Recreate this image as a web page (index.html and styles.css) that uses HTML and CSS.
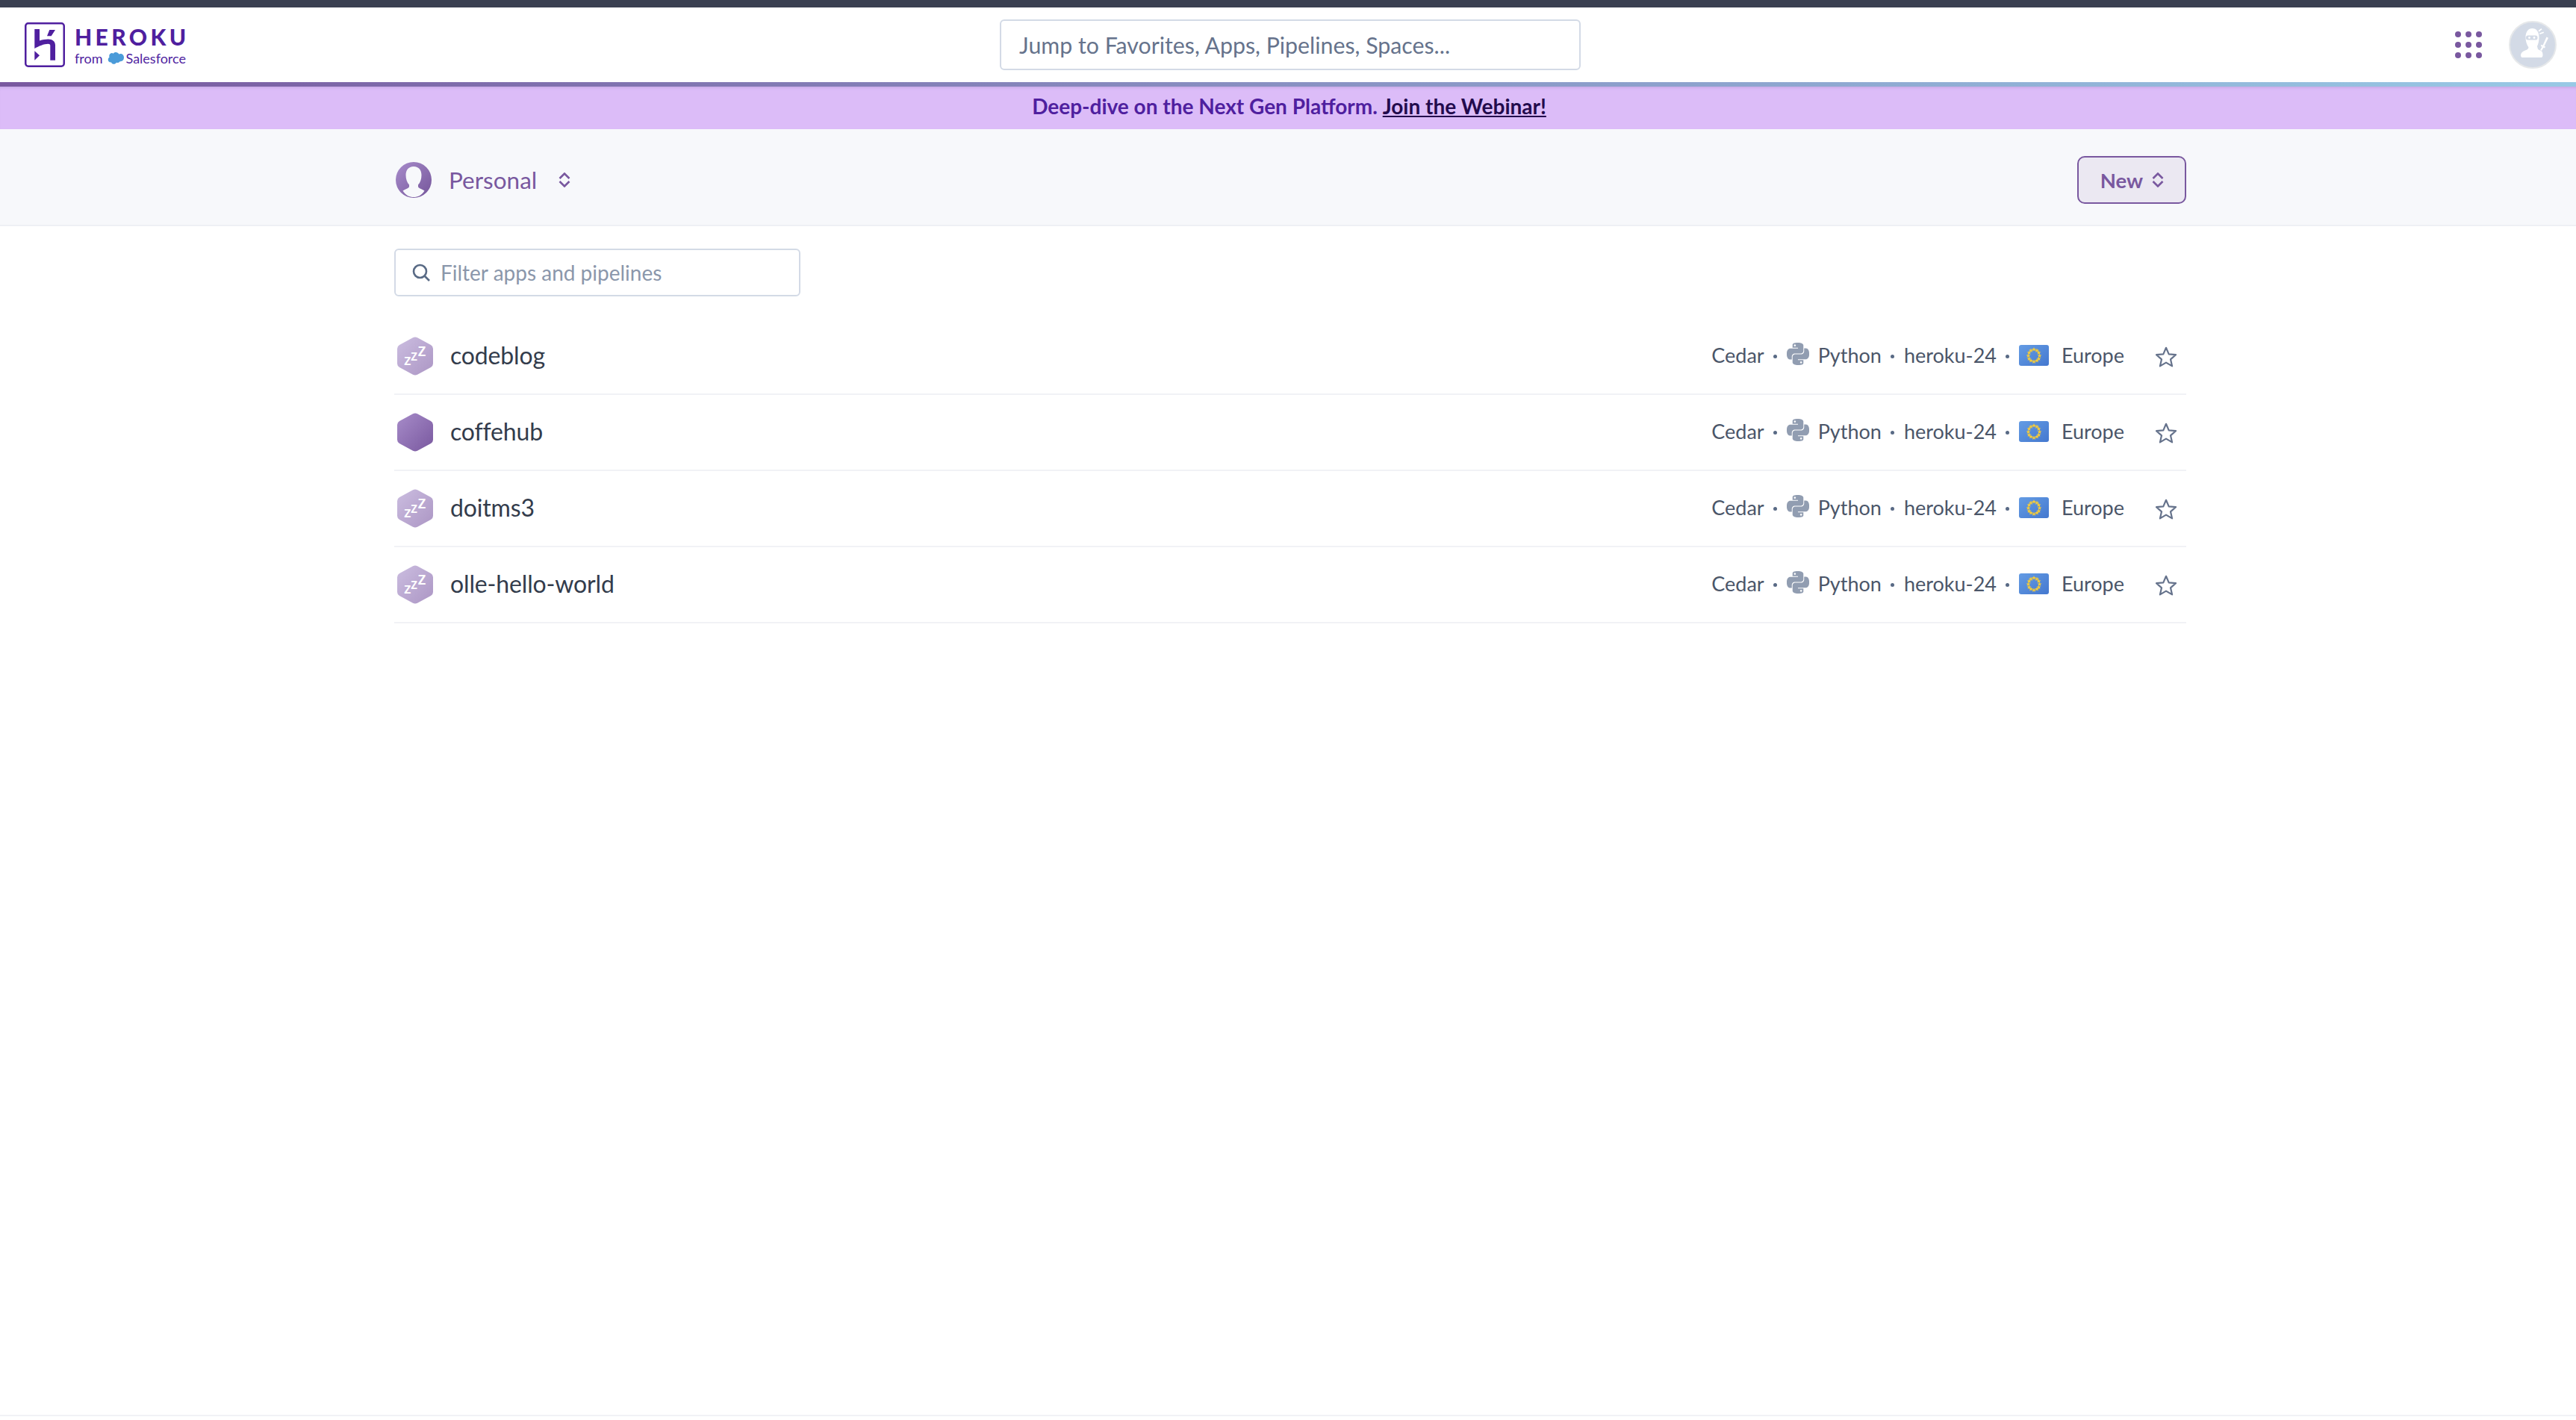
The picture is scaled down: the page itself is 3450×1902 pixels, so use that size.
FILE: index.html
```html
<!DOCTYPE html>
<html lang="en">
<head>
    <meta charset="UTF-8">
    <title>Personal apps | Heroku</title>
    <link rel="stylesheet" href="styles.css">
</head>
<body>
    <!-- shared icons -->
    <svg class="sprites" aria-hidden="true">
        <defs>
            <linearGradient id="hexDim" x1="0" y1="0" x2="1" y2="1">
                <stop offset="0" stop-color="#cbbde0"/>
                <stop offset="1" stop-color="#ac96c4"/>
            </linearGradient>
            <linearGradient id="hexUp" x1="0" y1="0" x2="1" y2="1">
                <stop offset="0" stop-color="#a78cc9"/>
                <stop offset="1" stop-color="#79589f"/>
            </linearGradient>
            <linearGradient id="personGrad" x1="0" y1="0" x2="1" y2="1">
                <stop offset="0" stop-color="#a88ccb"/>
                <stop offset="1" stop-color="#74559a"/>
            </linearGradient>
            <linearGradient id="flagGrad" x1="0" y1="0" x2="1" y2="1">
                <stop offset="0" stop-color="#649ce4"/>
                <stop offset="1" stop-color="#4478cf"/>
            </linearGradient>
            <path id="hexShape" d="M21 1.2Q24-.4 27 1.2L45 11Q48 12.8 48 16V36Q48 39.2 45 41L27 50.8Q24 52.4 21 50.8L3 41Q0 39.2 0 36V16Q0 12.8 3 11Z"/>
            <polygon id="euStar" points="0,-3 .8,-1 2.900,-1 1.300,.4 1.900,2.500 0,1.300 -1.900,2.500 -1.300,.4 -2.900,-1 -.8,-1"/>
        </defs>
        <symbol id="iconPython" viewBox="0 0 24 24">
            <path d="M14.25.18l.9.2.73.26.59.3.45.32.34.34.25.34.16.33.1.3.04.26.02.2-.01.13V8.5l-.05.63-.13.55-.21.46-.26.38-.3.31-.33.25-.35.19-.35.14-.33.1-.3.07-.26.04-.21.02H8.77l-.69.05-.59.14-.5.22-.41.27-.33.32-.27.35-.2.36-.15.37-.1.35-.07.32-.04.27-.02.21v3.06H3.17l-.21-.03-.28-.07-.32-.12-.35-.18-.36-.26-.36-.36-.35-.46-.32-.59-.28-.73-.21-.88-.14-1.05-.05-1.23.06-1.22.16-1.04.24-.87.32-.71.36-.57.4-.44.42-.33.42-.24.4-.16.36-.1.32-.05.24-.01h.16l.06.01h8.16v-.83H6.18l-.01-2.75-.02-.37.05-.34.11-.31.17-.28.25-.26.31-.23.38-.2.44-.18.51-.15.58-.12.64-.1.71-.06.77-.04.84-.02 1.27.05zm-6.3 1.98l-.23.33-.08.41.08.41.23.34.33.22.41.09.41-.09.33-.22.23-.34.08-.41-.08-.41-.23-.33-.33-.22-.41-.09-.41.09zm13.09 3.95l.28.06.32.12.35.18.36.27.36.35.35.47.32.59.28.73.21.88.14 1.04.05 1.23-.06 1.23-.16 1.04-.24.86-.32.71-.36.57-.4.45-.42.33-.42.24-.4.16-.36.09-.32.05-.24.02-.16-.01h-8.22v.82h5.84l.01 2.76.02.36-.05.34-.11.31-.17.29-.25.25-.31.24-.38.2-.44.17-.51.15-.58.13-.64.09-.71.07-.77.04-.84.01-1.27-.04-1.07-.14-.9-.2-.73-.25-.59-.3-.45-.33-.34-.34-.25-.34-.16-.33-.1-.3-.04-.25-.02-.2.01-.13v-5.34l.05-.64.13-.54.21-.46.26-.38.3-.32.33-.24.35-.2.35-.14.33-.1.3-.06.26-.04.21-.02.13-.01h5.84l.69-.05.59-.14.5-.21.41-.28.33-.32.27-.35.2-.36.15-.36.1-.35.07-.32.04-.28.02-.21V6.07h2.09l.14.01zm-6.47 14.25l-.23.33-.08.41.08.41.23.33.33.23.41.08.41-.08.33-.23.23-.33.08-.41-.08-.41-.23-.33-.33-.23-.41-.08-.41.08z"/>
        </symbol>
        <symbol id="iconFlag" viewBox="0 0 40 28">
            <rect width="40" height="28" rx="3" fill="url(#flagGrad)"/>
            <g fill="#f3cb3c">
                <use href="#euStar" x="20" y="6"/>
                <use href="#euStar" x="24" y="7.500"/>
                <use href="#euStar" x="26.500" y="10.500"/>
                <use href="#euStar" x="27.500" y="14.500"/>
                <use href="#euStar" x="26.500" y="18.500"/>
                <use href="#euStar" x="24" y="21"/>
                <use href="#euStar" x="20" y="22.500"/>
                <use href="#euStar" x="16" y="21"/>
                <use href="#euStar" x="13.500" y="18.500"/>
                <use href="#euStar" x="12.500" y="14.500"/>
                <use href="#euStar" x="13.500" y="10.500"/>
                <use href="#euStar" x="16" y="7.500"/>
            </g>
        </symbol>
        <symbol id="iconStar" viewBox="0 0 30 28">
            <path d="M15 1.800l3.700 8.600 9.300.8-7 6.100 2.100 9.100-8.100-4.800-8.100 4.800 2.100-9.100-7-6.100 9.300-.8z" fill="none" stroke="#66738c" stroke-width="2.200" stroke-linejoin="round"/>
        </symbol>
        <symbol id="iconUpDown" viewBox="0 0 16 20">
            <path d="M1.500 8L8 1.500 14.500 8M1.500 12L8 18.500 14.500 12" fill="none" stroke="currentColor" stroke-width="2.600"/>
        </symbol>
    </svg>

    <div class="topStrip"></div>

    <header class="navBar">
        <a class="brand" href="#">
            <svg class="brandMark" viewBox="0 0 54 60">
                <rect x="1.250" y="1.250" width="51.500" height="57.500" rx="3.500" fill="none" stroke="#4f1f9f" stroke-width="2.500"/>
                <path fill="#4f1f9f" d="M13.300 9H20V24.500C24 23.300 28 22.600 31.500 22.600C37.500 22.600 41 25.800 41 30.500V50.700H34.300V31C34.300 29.500 33 28.800 31.500 28.800C26 28.800 19 31.800 13.300 35ZM33.300 10H41L35.700 18.300H30ZM13.300 38.300L20 44.300L13.300 50.700Z"/>
            </svg>
            <div class="brandText">
                <span class="brandName">HEROKU</span>
                <span class="brandFrom">from
                    <svg class="brandCloud" viewBox="0 0 24 16">
                        <path fill="#4a9bd9" d="M10 2.600C10.900 1.500 12.200.9 13.600.9c1.700 0 3.200.9 4 2.300.7-.3 1.400-.5 2.200-.5C22.100 2.700 24 4.900 24 7.600s-1.900 5-4.200 5c-.4 0-.7 0-1-.1-.6 1.100-1.800 1.800-3.100 1.800-.6 0-1.100-.1-1.500-.4-.6 1.300-1.800 2.100-3.200 2.100-1.500 0-2.800-.9-3.300-2.300-.3.1-.5.1-.8.1-1.800 0-3.300-1.500-3.300-3.500 0-1.300.7-2.400 1.700-3-.2-.5-.3-1-.3-1.500C4.900 3.400 6.700 1.700 8.900 1.700c.4 0 .8.300 1.100.9z"/>
                    </svg>
                    Salesforce</span>
            </div>
        </a>
        <div class="jump">
            <input class="jumpInput" type="text" placeholder="Jump to Favorites, Apps, Pipelines, Spaces...">
        </div>
        <div class="navRight">
            <svg class="appsGrid" viewBox="0 0 36 36" fill="#79589f">
                <circle cx="4" cy="4" r="4"/><circle cx="18" cy="4" r="4"/><circle cx="32" cy="4" r="4"/>
                <circle cx="4" cy="18" r="4"/><circle cx="18" cy="18" r="4"/><circle cx="32" cy="18" r="4"/>
                <circle cx="4" cy="32" r="4"/><circle cx="18" cy="32" r="4"/><circle cx="32" cy="32" r="4"/>
            </svg>
            <div class="userAvatar">
                <svg viewBox="0 0 60 60" fill="#fff">
                    <path d="M14 44C14 41 16 39 20 37.500C23 36.500 24.500 35 24.500 33.500C22 30 20.500 25 20.500 20C20.500 12.500 24 8 29.500 8C35 8 38.500 12.500 38.500 20C38.500 25 37.500 29 36 32L37 36L42 38.500C43 39.500 43.500 41.500 43.500 44C43.500 46 42.500 47 41.500 47H16C15 47 14 46 14 44Z"/>
                    <rect x="21" y="17.500" width="15.500" height="6" rx="2.500" fill="#d3dae6"/>
                    <circle cx="25.500" cy="20.500" r="1.400"/><circle cx="32" cy="20.500" r="1.400"/>
                    <path d="M37.500 11l4-3 1 1.500-4 3zM39 14.500l5.500-2 .6 1.500-5.500 2z"/>
                    <path d="M48.500 19.500l2.500 1.200-5.500 11 1.500.8-1 2-1.500-.8-2.500 4.300-2-1 2.500-4.300-1.800-1 1-2 1.800 1z"/>
                </svg>
            </div>
        </div>
    </header>
    <div class="rainbow"></div>

    <div class="banner">
        Deep-dive on the Next Gen Platform.&nbsp;<a href="#">Join the Webinar!</a>
    </div>

    <div class="subHeader">
        <div class="wrap subHeaderRow">
            <div class="account">
                <svg class="accountIcon" viewBox="0 0 48 48">
                    <circle cx="24" cy="24" r="24" fill="url(#personGrad)"/>
                    <path fill="#f7f8fb" d="M24 6c7 0 10.500 5 10.500 11.500 0 5-1.500 10-4.500 13v2.500c0 1.500 4 3 8.500 5.500C34.500 45 29.500 47 24 47s-10.500-2-14.500-8.500C14 36 18 34.500 18 33v-2.500c-3-3-4.500-8-4.500-13C13.500 11 17 6 24 6z"/>
                </svg>
                <span class="accountName">Personal</span>
                <svg class="upDown"><use href="#iconUpDown"/></svg>
            </div>
            <button class="newBtn">New <svg class="upDown"><use href="#iconUpDown"/></svg></button>
        </div>
    </div>

    <main class="wrap content">
        <div class="filter">
            <svg class="filterIcon" viewBox="0 0 24 24" fill="none" stroke="#596a85" stroke-width="2.600">
                <circle cx="10.500" cy="10.500" r="8.500"/>
                <path d="M16.500 16.500L23 23"/>
            </svg>
            <input class="filterInput" type="text" placeholder="Filter apps and pipelines">
        </div>

        <ul class="appList">
            <li class="appRow">
                <svg class="hex">
                    <use href="#hexShape" fill="url(#hexDim)"/>
                    <text class="zzz zzzSmall" x="9" y="38">z</text>
                    <text class="zzz zzzMid" x="18" y="32">z</text>
                    <text class="zzz zzzBig" x="27.500" y="26">z</text>
                </svg>
                <a class="appName" href="#">codeblog</a>
                <div class="appMeta">
                    <span>Cedar</span><i class="sep"></i>
                    <svg class="metaPy"><use href="#iconPython"/></svg><span>Python</span><i class="sep"></i>
                    <span>heroku-24</span><i class="sep"></i>
                    <svg class="metaFlag"><use href="#iconFlag"/></svg><span class="metaRegion">Europe</span>
                    <svg class="metaStar"><use href="#iconStar"/></svg>
                </div>
            </li>
            <li class="appRow">
                <svg class="hex"><use href="#hexShape" fill="url(#hexUp)"/></svg>
                <a class="appName" href="#">coffehub</a>
                <div class="appMeta">
                    <span>Cedar</span><i class="sep"></i>
                    <svg class="metaPy"><use href="#iconPython"/></svg><span>Python</span><i class="sep"></i>
                    <span>heroku-24</span><i class="sep"></i>
                    <svg class="metaFlag"><use href="#iconFlag"/></svg><span class="metaRegion">Europe</span>
                    <svg class="metaStar"><use href="#iconStar"/></svg>
                </div>
            </li>
            <li class="appRow">
                <svg class="hex">
                    <use href="#hexShape" fill="url(#hexDim)"/>
                    <text class="zzz zzzSmall" x="9" y="38">z</text>
                    <text class="zzz zzzMid" x="18" y="32">z</text>
                    <text class="zzz zzzBig" x="27.500" y="26">z</text>
                </svg>
                <a class="appName" href="#">doitms3</a>
                <div class="appMeta">
                    <span>Cedar</span><i class="sep"></i>
                    <svg class="metaPy"><use href="#iconPython"/></svg><span>Python</span><i class="sep"></i>
                    <span>heroku-24</span><i class="sep"></i>
                    <svg class="metaFlag"><use href="#iconFlag"/></svg><span class="metaRegion">Europe</span>
                    <svg class="metaStar"><use href="#iconStar"/></svg>
                </div>
            </li>
            <li class="appRow">
                <svg class="hex">
                    <use href="#hexShape" fill="url(#hexDim)"/>
                    <text class="zzz zzzSmall" x="9" y="38">z</text>
                    <text class="zzz zzzMid" x="18" y="32">z</text>
                    <text class="zzz zzzBig" x="27.500" y="26">z</text>
                </svg>
                <a class="appName" href="#">olle-hello-world</a>
                <div class="appMeta">
                    <span>Cedar</span><i class="sep"></i>
                    <svg class="metaPy"><use href="#iconPython"/></svg><span>Python</span><i class="sep"></i>
                    <span>heroku-24</span><i class="sep"></i>
                    <svg class="metaFlag"><use href="#iconFlag"/></svg><span class="metaRegion">Europe</span>
                    <svg class="metaStar"><use href="#iconStar"/></svg>
                </div>
            </li>
        </ul>
    </main>

    <footer class="pageFoot"></footer>
</body>
</html>
```

FILE: styles.css
```css
* {
    box-sizing: border-box;
}
html, body {
    height: 100%;
}
body {
    margin: 0;
    display: flex;
    flex-direction: column;
    min-height: 1902px;
    background-color: #ffffff;
    color: #3f4a5c;
    font-family: "Lato", "Liberation Sans", sans-serif;
}
a {
    color: inherit;
    text-decoration: none;
}
.sprites {
    display: block;
    width: 0;
    height: 0;
    overflow: hidden;
}
.wrap {
    width: 2400px;
    margin-left: 528px;
}

/* top bars */
.topStrip {
    height: 10px;
    background-color: #3a4051;
}
.navBar {
    display: flex;
    align-items: center;
    height: 100px;
    padding: 0 26px 0 33px;
    background-color: #ffffff;
}
.brand {
    display: flex;
    align-items: center;
    gap: 13px;
    width: 1306px;
    color: #4f1f9f;
}
.brandMark {
    width: 54px;
    height: 60px;
}
.brandText {
    display: flex;
    flex-direction: column;
    gap: 3px;
    margin-top: 2px;
}
.brandName {
    font-size: 30px;
    line-height: 30px;
    font-weight: 900;
    letter-spacing: 4.4px;
}
.brandFrom {
    display: flex;
    align-items: center;
    gap: 3px;
    font-size: 18px;
    line-height: 22px;
}
.brandCloud {
    width: 25px;
    height: 17px;
}
.jump {
    width: 778px;
}
.jumpInput, .filterInput {
    width: 100%;
    border: 2px solid #d3dae6;
    border-radius: 6px;
    background-color: #ffffff;
    font-family: inherit;
    outline: none;
}
.jumpInput {
    height: 68px;
    padding: 0 24px;
    font-size: 30.3px;
}
.jumpInput::placeholder {
    color: #66738c;
    opacity: 1;
}
.navRight {
    display: flex;
    align-items: center;
    gap: 36px;
    margin-left: auto;
}
.appsGrid {
    width: 36px;
    height: 36px;
}
.userAvatar {
    width: 64px;
    height: 64px;
    border: 2px solid #e6e8ea;
    border-radius: 50%;
    background-color: #d3dae6;
}
.userAvatar svg {
    display: block;
    width: 60px;
    height: 60px;
}
.rainbow {
    height: 6px;
    background: linear-gradient(to right, #79589f, #98c9e5);
}
.banner {
    height: 57px;
    padding-bottom: 6px;
    padding-left: 3px;
    display: flex;
    align-items: center;
    justify-content: center;
    background-color: #dcbcf8;
    box-shadow: inset 0 4px 4px -3px rgba(80, 50, 120, 0.18);
    color: #4f1f9f;
    font-size: 28px;
    font-weight: 700;
}
.banner a {
    color: #230b4d;
    text-decoration: underline;
}

/* account row */
.subHeader {
    height: 130px;
    background-color: #f7f8fb;
    border-bottom: 2px solid #eef0f5;
}
.subHeaderRow {
    display: flex;
    align-items: center;
    justify-content: space-between;
    height: 128px;
    padding-top: 8px;
}
.account {
    display: flex;
    align-items: center;
    padding-left: 2px;
    color: #79589f;
}
.accountIcon {
    width: 48px;
    height: 48px;
    margin-right: 23px;
}
.accountName {
    font-size: 31.5px;
    margin-right: 29px;
}
.upDown {
    width: 16px;
    height: 20px;
}
.newBtn {
    display: flex;
    align-items: center;
    justify-content: center;
    gap: 12px;
    width: 146px;
    height: 64px;
    padding-left: 7px;
    border: 2px solid #79589f;
    border-radius: 10px;
    background-color: #ebe8f2;
    color: #79589f;
    font-family: inherit;
    font-size: 27.5px;
    font-weight: 700;
}

/* app list */
.content {
    flex: 1;
    padding-top: 30px;
}
.filter {
    display: flex;
    align-items: center;
    position: relative;
    width: 544px;
}
.filterIcon {
    position: absolute;
    left: 24px;
    top: 20px;
    width: 24px;
    height: 24px;
}
.filterInput {
    height: 64px;
    padding: 0 20px 0 60px;
    font-size: 28px;
}
.filterInput::placeholder {
    color: #8b97ab;
    opacity: 1;
}
.appList {
    list-style: none;
    margin: 30px 0 0;
    padding: 0;
}
.appRow {
    display: flex;
    align-items: center;
    height: 102px;
    padding-left: 4px;
    border-bottom: 2px solid #f1f2f6;
}
.hex {
    width: 48px;
    height: 52px;
    margin-right: 23px;
}
.zzz {
    fill: #ffffff;
    font-family: "Open Sans", sans-serif;
    font-weight: 600;
}
.zzzSmall { font-size: 20px; }
.zzzMid { font-size: 19px; }
.zzzBig { font-size: 23px; }
.appName {
    margin-top: -3px;
    font-size: 32px;
    letter-spacing: -0.15px;
    color: #333c4c;
}
.appMeta {
    display: flex;
    align-items: center;
    margin-left: auto;
    padding-right: 12px;
    font-size: 27px;
    color: #4b5669;
}
.appMeta span {
    margin-top: -3px;
}
.sep {
    width: 5px;
    height: 5px;
    margin: 0 12.5px;
    border-radius: 50%;
    background-color: #596a85;
}
.metaPy {
    width: 30px;
    height: 30px;
    margin-right: 12px;
    margin-top: -6px;
    fill: #919db1;
}
.metaFlag {
    width: 40px;
    height: 28px;
    margin-top: -2px;
}
.appMeta .metaRegion {
    margin-left: 17px;
}
.metaStar {
    width: 30px;
    height: 28px;
    margin-left: 41px;
    margin-top: 2px;
}
.pageFoot {
    height: 7px;
    border-top: 2px solid #f1f2f6;
}
```
